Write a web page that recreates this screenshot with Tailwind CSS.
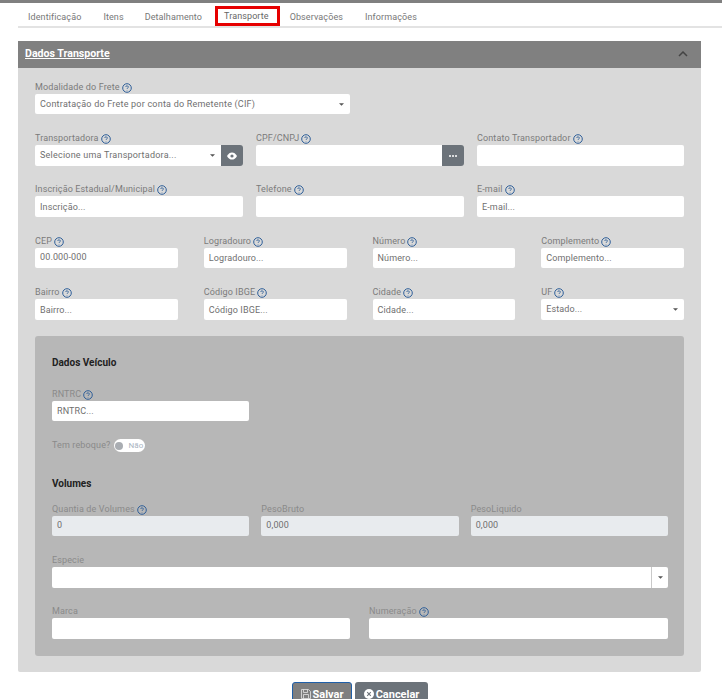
<!DOCTYPE html>
<html lang="pt-BR">
<head>
  <meta charset="UTF-8">
  <title>Transporte</title>
  <script src="https://cdn.jsdelivr.net/npm/@tailwindcss/browser@4"></script>
</head>
<body class="bg-white h-[699px] overflow-hidden font-['Roboto',sans-serif] text-[9px] tracking-[0.13px] text-[#7b7b7b]">
  <svg class="hidden">
    <symbol id="help" viewBox="0 0 10 10">
      <circle cx="5" cy="5" r="4.3" fill="none" stroke="#2f5f99" stroke-width="1"/>
      <path d="M3.700 4a1.300 1.200 0 1 1 1.900 1.100c-.4.2-.6.4-.6.8M5 7.200v.4" fill="none" stroke="#2f5f99" stroke-width="0.9"/>
    </symbol>
    <symbol id="caret" viewBox="0 0 6 3"><path d="M0 0h6L3 3z" fill="#555"/></symbol>
  </svg>

  <div class="h-[3px] bg-[#808080]"></div>

  <!-- Abas -->
  <div class="ml-[18px] h-[25px] flex items-center border-b-2 border-[#e3e3e3] relative">
    <div class="flex items-center tracking-[0.1px] text-[#777] pt-[7px]">
      <span class="ml-[10px]">Identificação</span>
      <span class="ml-[22px]">Itens</span>
      <span class="ml-[21px]">Detalhamento</span>
      <span class="ml-[22px] text-[#666] -mt-[2px]">Transporte</span>
      <span class="ml-[21px]">Observações</span>
      <span class="ml-[22px]">Informações</span>
    </div>
    <div class="absolute left-[197px] top-[3px] w-[65px] h-[20px] border-[3px] border-[#e60000]"></div>
  </div>

  <!-- Painel -->
  <div class="ml-[18px] mr-[21px] mt-[13px]">
    <div class="h-[27px] bg-[#808080] flex items-center justify-between pl-[7px] pr-[13px] pb-[1px]">
      <span class="text-white font-bold text-[10.6px] underline tracking-normal">Dados Transporte</span>
      <svg class="w-[10px] h-[6px]" viewBox="0 0 10 6"><path d="M1 5l4-4 4 4" fill="none" stroke="#444" stroke-width="1.500"/></svg>
    </div>
    <div class="bg-[#d9d9d9] h-[604px] px-[17px] pt-[13px] rounded-b-[2px]">

      <div class="w-[315px]">
        <div class="h-[13px] flex items-center gap-[2px]">Modalidade do Frete <svg class="w-[10px] h-[10px]"><use href="#help"/></svg></div>
        <div class="h-[20px] bg-white rounded-[2px] flex items-center justify-between pl-[5px] pr-[6px] text-[#6f6f6f] tracking-[0.22px]">
          <span class="pt-[2px]">Contratação do Frete por conta do Remetente (CIF)</span>
          <svg class="w-[5px] h-[3px]"><use href="#caret"/></svg>
        </div>
      </div>

      <div class="grid grid-cols-[208px_208px_1fr] gap-x-[13px] mt-[18px]">
        <div>
          <div class="h-[13px] flex items-center gap-[2px]">Transportadora <svg class="w-[10px] h-[10px]"><use href="#help"/></svg></div>
          <div class="flex h-[21px]">
            <div class="flex-1 bg-white rounded-l-[2px] flex items-center justify-between pl-[5px] pr-[6px] text-[#6f6f6f] tracking-[0.22px]">
              <span>Selecione uma Transportadora...</span>
              <svg class="w-[5px] h-[3px]"><use href="#caret"/></svg>
            </div>
            <div class="w-[22px] bg-[#6c737a] rounded-r-[3px] flex items-center justify-center">
              <svg class="w-[10px] h-[8px]" viewBox="0 0 10 8"><path d="M0 4c1.500-2.600 3-3.600 5-3.600S8.500 1.400 10 4C8.500 6.600 7 7.600 5 7.600S1.500 6.600 0 4z" fill="#fff"/><circle cx="5" cy="4" r="1.600" fill="#6c737a"/></svg>
            </div>
          </div>
        </div>
        <div>
          <div class="h-[13px] flex items-center gap-[2px]">CPF/CNPJ <svg class="w-[10px] h-[10px]"><use href="#help"/></svg></div>
          <div class="flex h-[21px]">
            <div class="flex-1 bg-white rounded-l-[2px]"></div>
            <div class="w-[22px] bg-[#6c737a] rounded-r-[3px] flex items-center justify-center gap-[1px]">
              <span class="w-[2px] h-[2px] rounded-full bg-white"></span>
              <span class="w-[2px] h-[2px] rounded-full bg-white"></span>
              <span class="w-[2px] h-[2px] rounded-full bg-white"></span>
            </div>
          </div>
        </div>
        <div>
          <div class="h-[13px] flex items-center gap-[2px]">Contato Transportador <svg class="w-[10px] h-[10px]"><use href="#help"/></svg></div>
          <div class="h-[21px] bg-white rounded-[2px]"></div>
        </div>
      </div>

      <div class="grid grid-cols-[208px_208px_1fr] gap-x-[13px] mt-[17px]">
        <div>
          <div class="h-[13px] flex items-center gap-[2px]">Inscrição Estadual/Municipal <svg class="w-[10px] h-[10px]"><use href="#help"/></svg></div>
          <div class="h-[21px] bg-white rounded-[2px] flex items-center pl-[5px] pt-[2px] text-[#6f6f6f]">Inscrição...</div>
        </div>
        <div>
          <div class="h-[13px] flex items-center gap-[2px]">Telefone <svg class="w-[10px] h-[10px]"><use href="#help"/></svg></div>
          <div class="h-[21px] bg-white rounded-[2px]"></div>
        </div>
        <div>
          <div class="h-[13px] flex items-center gap-[2px]">E-mail <svg class="w-[10px] h-[10px]"><use href="#help"/></svg></div>
          <div class="h-[21px] bg-white rounded-[2px] flex items-center pl-[5px] pt-[2px] text-[#6f6f6f]">E-mail...</div>
        </div>
      </div>

      <div class="grid grid-cols-4 gap-x-[26px] mt-[18px]">
        <div>
          <div class="h-[13px] flex items-center gap-[2px]">CEP <svg class="w-[10px] h-[10px]"><use href="#help"/></svg></div>
          <div class="h-[20px] bg-white rounded-[2px] flex items-center pl-[5px] text-[#6f6f6f]">00.000-000</div>
        </div>
        <div>
          <div class="h-[13px] flex items-center gap-[2px]">Logradouro <svg class="w-[10px] h-[10px]"><use href="#help"/></svg></div>
          <div class="h-[20px] bg-white rounded-[2px] flex items-center pl-[5px] pt-[2px] text-[#6f6f6f]">Logradouro...</div>
        </div>
        <div>
          <div class="h-[13px] flex items-center gap-[2px]">Número <svg class="w-[10px] h-[10px]"><use href="#help"/></svg></div>
          <div class="h-[20px] bg-white rounded-[2px] flex items-center pl-[5px] pt-[2px] text-[#6f6f6f]">Número...</div>
        </div>
        <div>
          <div class="h-[13px] flex items-center gap-[2px]">Complemento <svg class="w-[10px] h-[10px]"><use href="#help"/></svg></div>
          <div class="h-[20px] bg-white rounded-[2px] flex items-center pl-[5px] pt-[2px] text-[#6f6f6f]">Complemento...</div>
        </div>
      </div>

      <div class="grid grid-cols-4 gap-x-[26px] mt-[18px]">
        <div>
          <div class="h-[13px] flex items-center gap-[2px]">Bairro <svg class="w-[10px] h-[10px]"><use href="#help"/></svg></div>
          <div class="h-[21px] bg-white rounded-[2px] flex items-center pl-[5px] pt-[2px] text-[#6f6f6f]">Bairro...</div>
        </div>
        <div>
          <div class="h-[13px] flex items-center gap-[2px]">Código IBGE <svg class="w-[10px] h-[10px]"><use href="#help"/></svg></div>
          <div class="h-[21px] bg-white rounded-[2px] flex items-center pl-[5px] pt-[2px] text-[#6f6f6f]">Código IBGE...</div>
        </div>
        <div>
          <div class="h-[13px] flex items-center gap-[2px]">Cidade <svg class="w-[10px] h-[10px]"><use href="#help"/></svg></div>
          <div class="h-[21px] bg-white rounded-[2px] flex items-center pl-[5px] pt-[2px] text-[#6f6f6f]">Cidade...</div>
        </div>
        <div>
          <div class="h-[13px] flex items-center gap-[2px]">UF <svg class="w-[10px] h-[10px]"><use href="#help"/></svg></div>
          <div class="h-[21px] bg-white rounded-[2px] flex items-center justify-between pl-[5px] pr-[6px] text-[#6f6f6f]">
            <span>Estado...</span>
            <svg class="w-[5px] h-[3px]"><use href="#caret"/></svg>
          </div>
        </div>
      </div>

      <!-- Dados Veiculo -->
      <div class="mt-[16px] h-[320px] bg-[#b7b7b7] rounded-[3px] pl-[17px] pr-[16px] pt-[20px] text-[#8a8a8a]">
        <div class="h-[13px] flex items-center font-bold text-[#222] text-[10px] tracking-normal">Dados Veículo</div>

        <div class="w-[197px] mt-[19px]">
          <div class="h-[13px] flex items-center gap-[2px]">RNTRC <svg class="w-[10px] h-[10px]"><use href="#help"/></svg></div>
          <div class="h-[20px] bg-white rounded-[2px] flex items-center pl-[5px] pt-[2px] text-[#6f6f6f]">RNTRC...</div>
        </div>

        <div class="flex items-center mt-[18px] h-[13px]">
          <span>Tem reboque?</span>
          <div class="ml-[4px] w-[31px] h-[13px] bg-white rounded-full flex items-center pl-[1px]">
            <span class="w-[8px] h-[8px] rounded-full bg-[#a9adb2]"></span>
            <span class="ml-[5px] text-[8px] text-[#a9b4bf]">Não</span>
          </div>
        </div>

        <div class="h-[13px] flex items-center font-bold text-[#222] text-[10px] tracking-normal mt-[25px]">Volumes</div>

        <div class="grid grid-cols-3 gap-x-3 mt-[13px]">
          <div>
            <div class="h-[13px] flex items-center gap-[2px]">Quantia de Volumes <svg class="w-[10px] h-[10px]"><use href="#help"/></svg></div>
            <div class="h-[20px] bg-[#e8ebee] rounded-[2px] flex items-center pl-[5px] text-[#6f6f6f]">0</div>
          </div>
          <div>
            <div class="h-[13px] flex items-center">PesoBruto</div>
            <div class="h-[20px] bg-[#e8ebee] rounded-[2px] flex items-center pl-[5px] text-[#6f6f6f]">0,000</div>
          </div>
          <div>
            <div class="h-[13px] flex items-center">PesoLiquido</div>
            <div class="h-[20px] bg-[#e8ebee] rounded-[2px] flex items-center pl-[5px] text-[#6f6f6f]">0,000</div>
          </div>
        </div>

        <div class="mt-[18px]">
          <div class="h-[13px] flex items-center">Especie</div>
          <div class="h-[21px] bg-white rounded-[2px] flex justify-end">
            <div class="w-[17px] border-l border-[#c9c9c9] flex items-center justify-center">
              <svg class="w-[5px] h-[3px]"><use href="#caret"/></svg>
            </div>
          </div>
        </div>

        <div class="grid grid-cols-[298px_1fr] gap-x-[19px] mt-[17px]">
          <div>
            <div class="h-[13px] flex items-center">Marca</div>
            <div class="h-[21px] bg-white rounded-[2px]"></div>
          </div>
          <div>
            <div class="h-[13px] flex items-center gap-[2px]">Numeração <svg class="w-[10px] h-[10px]"><use href="#help"/></svg></div>
            <div class="h-[21px] bg-white rounded-[2px]"></div>
          </div>
        </div>
      </div>
    </div>

    <!-- Botoes -->
    <div class="flex justify-center gap-[3px] mt-[10px] pl-[1px]">
      <div class="h-[26px] w-[60px] bg-[#7f7f7f] border border-[#1f5fa8] rounded-[3px] flex items-start justify-center gap-[2px] pt-[4px] text-white font-bold text-[11px] tracking-normal">
        <svg class="w-[10px] h-[10px] mt-[2px]" viewBox="0 0 10 10"><path d="M.5.500h7l2 2v7H.5zM2.500.500v3h4v-3M2.500 9.500v-4h5v4" fill="none" stroke="#e5e5e5" stroke-width="0.8"/></svg>
        Salvar
      </div>
      <div class="h-[26px] w-[73px] bg-[#6c737a] rounded-[3px] flex items-start justify-center gap-[2px] pt-[5px] text-white font-bold text-[11px] tracking-normal">
        <svg class="w-[10px] h-[10px] mt-[2px]" viewBox="0 0 10 10"><circle cx="5" cy="5" r="5" fill="#fff"/><path d="M3.200 3.200l3.600 3.600M6.800 3.200l-3.600 3.600" stroke="#6c737a" stroke-width="1.100"/></svg>
        Cancelar
      </div>
    </div>
  </div>
</body>
</html>
